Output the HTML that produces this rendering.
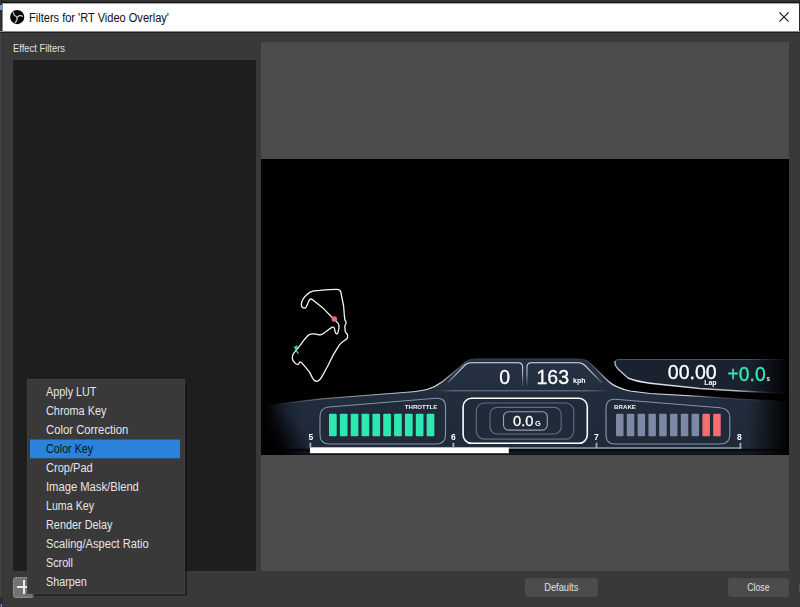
<!DOCTYPE html>
<html>
<head>
<meta charset="utf-8">
<title>Filters for 'RT Video Overlay'</title>
<style>
html,body{margin:0;padding:0;}
body{width:800px;height:607px;overflow:hidden;background:#393939;font-family:"Liberation Sans",sans-serif;position:relative;}
.abs{position:absolute;}
#frame{left:0;top:0;width:800px;height:607px;background:#393939;}
#topborder{left:0;top:0;width:800px;height:4px;background:linear-gradient(#333 0,#333 1px,#2f2f2f 1px,#2f2f2f 2px,#161616 2px,#161616 3px,#a8a8a8 3px,#a8a8a8 4px);}
#titlebar{left:3px;top:4px;width:796px;height:27px;background:#ffffff;}
#titleline{left:0;top:31px;width:800px;height:2px;background:linear-gradient(#8c8c8c 0,#8c8c8c 1px,#202020 1px,#202020 2px);}
#leftedge{left:0;top:0;width:3px;height:607px;background:linear-gradient(90deg,#414141 0,#414141 1.8px,#333 2.2px,#333 3px);}
#rightedge{left:799px;top:0;width:1px;height:33px;background:#2a2a2a;}
#title{left:29px;top:9.7px;font-size:12.5px;line-height:16px;color:#111;white-space:nowrap;transform-origin:0 50%;transform:scaleX(0.884);}
#efflabel{left:13px;top:41px;font-size:10.5px;line-height:14px;color:#e0e0e0;white-space:nowrap;transform-origin:0 50%;transform:scaleX(0.894);}
#list{left:13px;top:60px;width:243px;height:511px;background:#1f1e1f;}
#pane{left:261px;top:42px;width:528px;height:529px;background:#4c4c4c;}
#video{left:261px;top:159px;width:528px;height:296px;background:#000;overflow:hidden;}
.btn{background:#4c4c4c;border-radius:3px;color:#e0e0e0;font-size:10.5px;text-align:center;line-height:19.500px;height:19.500px;top:577.750px;}
#plus{left:13px;top:577px;width:20.500px;height:21px;background:#727272;border-radius:3px;}
#menu{left:27px;top:379.250px;width:158px;height:214.500px;background:#393939;box-shadow:0 0 0 1px #414141 inset;}
.mi{position:absolute;left:3px;width:150px;height:19px;line-height:19px;font-size:12.5px;color:#e6e6e6;white-space:nowrap;}
.mi span{position:absolute;left:16.3px;top:0;display:inline-block;transform-origin:0 50%;}
.mi.sel{background:none;color:#0b1622;}
#selbg{left:30px;top:439px;width:150px;height:20px;background:linear-gradient(to bottom,rgba(42,130,218,0.45) 0,rgba(42,130,218,0.45) 1px,#2a82da 1px,#2a82da 19px,rgba(42,130,218,0.35) 19px,rgba(42,130,218,0.35) 20px);}
</style>
</head>
<body>
<div id="frame" class="abs"></div>
<div id="topborder" class="abs"></div>
<div id="leftedge" class="abs"></div>
<div id="rightedge" class="abs"></div>
<div class="abs" style="left:0;top:0;width:3px;height:33px;background:linear-gradient(90deg,#343434 0,#343434 1px,#282828 1px,#282828 2px,#8a8a8a 2px,#8a8a8a 3px)"></div>
<div class="abs" style="left:2px;top:0;width:1px;height:3px;background:#1c1c1c"></div>
<div class="abs" style="left:2px;top:32px;width:1px;height:1px;background:#202020"></div>
<div class="abs" style="left:0;top:5px;width:2px;height:5px;background:linear-gradient(90deg,#4f93d6,#7aa9d8 60%,#c89a6a)"></div>
<div class="abs" style="left:0;top:596.500px;width:2.500px;height:7px;background:#2e2e2e"></div>
<div class="abs" style="left:0;top:603.500px;width:2px;height:3.500px;background:linear-gradient(90deg,#22226e,#9fb4cc)"></div>
<div class="abs" style="left:799px;top:584px;width:1px;height:8px;background:#57534b"></div>
<div id="titlebar" class="abs"></div>
<div id="titleline" class="abs"></div>

<!-- OBS icon -->
<svg class="abs" style="left:9px;top:9px" width="16" height="16" viewBox="0 0 16 16">
  <circle cx="8.200" cy="8.100" r="7.100" fill="#050505"/>
  <g fill="none" stroke="#c4c4c4" stroke-width="1.250" stroke-linecap="round">
    <path d="M4.300 3.700 C4.500 5.600 5.900 6.900 8.200 8.200"/>
    <path d="M13.400 7.300 C12 6.200 10 6.300 8.200 8.200"/>
    <path d="M6.200 13.400 C7.800 12.500 8.300 10.500 8.200 8.200"/>
  </g>
</svg>
<div id="title" class="abs">Filters for 'RT Video Overlay'</div>
<!-- close X -->
<svg class="abs" style="left:777px;top:10px" width="14" height="14" viewBox="0 0 14 14">
  <path d="M2.400 2.400 L11.600 11.600 M11.600 2.400 L2.400 11.600" stroke="#151515" stroke-width="1.150" fill="none"/>
</svg>

<div id="efflabel" class="abs">Effect Filters</div>
<div id="list" class="abs"></div>
<div id="pane" class="abs"></div>

<div id="video" class="abs">
<svg width="528" height="296" viewBox="261 159 528 296" style="position:absolute;left:0;top:0;will-change:transform;transform:translateZ(0)">
  <defs>
    <linearGradient id="fadeL" x1="0" y1="0" x2="1" y2="0" gradientUnits="objectBoundingBox">
      <stop offset="0" stop-color="#000" stop-opacity="1"/>
      <stop offset="0.250" stop-color="#000" stop-opacity="0.800"/>
      <stop offset="0.600" stop-color="#000" stop-opacity="0.250"/>
      <stop offset="1" stop-color="#000" stop-opacity="0"/>
    </linearGradient>
    <radialGradient id="fadeBL" cx="261" cy="458" r="52" gradientUnits="userSpaceOnUse">
      <stop offset="0" stop-color="#000" stop-opacity="1"/>
      <stop offset="0.450" stop-color="#000" stop-opacity="0.800"/>
      <stop offset="1" stop-color="#000" stop-opacity="0"/>
    </radialGradient>
    <linearGradient id="fadeR" x1="0" y1="0" x2="1" y2="0">
      <stop offset="0" stop-color="#000" stop-opacity="0"/>
      <stop offset="1" stop-color="#000" stop-opacity="1"/>
    </linearGradient>
    <linearGradient id="panelG" x1="0" y1="359" x2="0" y2="448" gradientUnits="userSpaceOnUse">
      <stop offset="0" stop-color="#263244"/>
      <stop offset="0.350" stop-color="#222d3d"/>
      <stop offset="1" stop-color="#1f2938"/>
    </linearGradient>
    <linearGradient id="edgeL" x1="265" y1="0" x2="474" y2="0" gradientUnits="userSpaceOnUse">
      <stop offset="0" stop-color="#c8ced6" stop-opacity="0"/>
      <stop offset="0.200" stop-color="#c8ced6" stop-opacity="0.350"/>
      <stop offset="0.600" stop-color="#d4d9e0" stop-opacity="0.800"/>
      <stop offset="0.830" stop-color="#e4e8ec" stop-opacity="1"/>
      <stop offset="0.900" stop-color="#aab2be" stop-opacity="0.600"/>
      <stop offset="1" stop-color="#56627a" stop-opacity="0.300"/>
    </linearGradient>
    <linearGradient id="edgeR" x1="580" y1="0" x2="789" y2="0" gradientUnits="userSpaceOnUse">
      <stop offset="0" stop-color="#56627a" stop-opacity="0.300"/>
      <stop offset="0.080" stop-color="#8c96a6" stop-opacity="0.600"/>
      <stop offset="0.150" stop-color="#e4e8ec" stop-opacity="1"/>
      <stop offset="0.500" stop-color="#d0d5dc" stop-opacity="0.950"/>
      <stop offset="0.670" stop-color="#8c96a6" stop-opacity="0.400"/>
      <stop offset="0.850" stop-color="#6c7686" stop-opacity="0.300"/>
      <stop offset="1" stop-color="#6c7686" stop-opacity="0"/>
    </linearGradient>
    <linearGradient id="lapS" x1="615" y1="0" x2="789" y2="0" gradientUnits="userSpaceOnUse">
      <stop offset="0" stop-color="#aab2be"/>
      <stop offset="0.150" stop-color="#e4e8ec"/>
      <stop offset="0.700" stop-color="#c8ced6" stop-opacity="0.900"/>
      <stop offset="0.850" stop-color="#9aa3b0" stop-opacity="0.350"/>
      <stop offset="1" stop-color="#9aa3b0" stop-opacity="0"/>
    </linearGradient>
    <linearGradient id="divG" x1="436" y1="0" x2="612" y2="0" gradientUnits="userSpaceOnUse">
      <stop offset="0" stop-color="#7d8796" stop-opacity="0"/>
      <stop offset="0.100" stop-color="#7d8796" stop-opacity="0.900"/>
      <stop offset="0.850" stop-color="#7d8796" stop-opacity="0.900"/>
      <stop offset="1" stop-color="#7d8796" stop-opacity="0"/>
    </linearGradient>
    <linearGradient id="boxS" x1="0" y1="362" x2="0" y2="387" gradientUnits="userSpaceOnUse">
      <stop offset="0" stop-color="#e2e6ea" stop-opacity="1"/>
      <stop offset="0.500" stop-color="#c0c6d0" stop-opacity="0.800"/>
      <stop offset="1" stop-color="#8c96a6" stop-opacity="0.150"/>
    </linearGradient>
    <linearGradient id="stripG" x1="0" y1="448.800" x2="0" y2="455" gradientUnits="userSpaceOnUse">
      <stop offset="0" stop-color="#06080c"/>
      <stop offset="0.300" stop-color="#090c12"/>
      <stop offset="0.600" stop-color="#141b27"/>
      <stop offset="1" stop-color="#0d1219"/>
    </linearGradient>
  </defs>

  <!-- lower main panel -->
  <path d="M261 406 L321 398.800 L410 392 C425 390.800 433 388.500 442 382 L460 367 C465 362.500 467 359.200 474 359 L580 359 C586 359.200 588 361 592 365 L608 381 C614 386.500 620 388.800 630 391 L650 393.500 L700 396.400 L740 399 L789 401.500 L789 455 L261 455 Z" fill="url(#panelG)"/>
  <!-- lap panel -->
  <path d="M619 359.500 L789 359.500 L789 394.800 L740 390.600 L700 387.800 L650 383.200 C640 382 633 380 628 378 L618 369 C615.500 366 614.500 362.500 615.500 361 C616 360 617 359.500 619 359.500 Z" fill="#1a2230"/>
  <path d="M789 359.500 L619 359.500 C617 359.500 616 360 615.500 361" fill="none" stroke="#5d6776" stroke-width="0.800"/>
  <path d="M615.500 361 C614.500 362.500 615.500 366 618 369 L628 378 C633 380 640 382 650 383.200 L700 388.500 L740 391 L789 393.500" fill="none" stroke="url(#lapS)" stroke-width="1.400"/>
  <!-- main panel highlight edges -->
  <path d="M261 406 L321 398.800 L410 392 C425 390.800 433 388.500 442 382 L460 367 C465 362.500 467 359.200 474 359" fill="none" stroke="url(#edgeL)" stroke-width="1.200"/>
  <path d="M474 359 L580 359" fill="none" stroke="#3a4556" stroke-width="1"/>
  <path d="M580 359 C586 359.200 588 361 592 365 L608 381 C614 386.500 620 388.800 630 391 L650 393.500 L700 396.400 L740 399 L789 401.500" fill="none" stroke="url(#edgeR)" stroke-width="1.200"/>
  <!-- divider -->
  <line x1="436" y1="390.800" x2="612" y2="390.800" stroke="url(#divG)" stroke-width="1"/>
  <!-- inner boxes for 0 / 163 -->
  <path d="M448 382.500 L465 365 C467 363.200 468.500 362.800 471 362.800 L518 362.800 C521 362.800 522.600 364.200 522.600 367 L522.600 386" fill="none" stroke="url(#boxS)" stroke-width="1.100"/>
  <path d="M527 386 L527 367 C527 364.200 528.600 362.800 531.500 362.800 L579 362.800 C581.500 362.800 583 363.400 585 365.500 L602 382.800" fill="none" stroke="url(#boxS)" stroke-width="1.100"/>

  <!-- bottom dark strip -->
  <rect x="261" y="448.800" width="528" height="7" fill="url(#stripG)"/>
  <!-- fades at left/right ends -->
  <rect x="261" y="385" width="40" height="71" fill="url(#fadeL)"/>
  <rect x="261" y="385" width="60" height="71" fill="url(#fadeBL)"/>
  <rect x="748" y="355" width="41" height="101" fill="url(#fadeR)"/>
  <line x1="310" y1="448" x2="741.300" y2="448" stroke="#8e9cb5" stroke-width="1.700"/>
  <rect x="310" y="447.500" width="198.800" height="5.700" fill="#ffffff"/>
  <g stroke="#9aaac4" stroke-width="1.800">
    <line x1="310.400" y1="442.800" x2="310.400" y2="448"/>
    <line x1="453.400" y1="442.800" x2="453.400" y2="448"/>
    <line x1="596.500" y1="442.800" x2="596.500" y2="448"/>
    <line x1="740.400" y1="442.800" x2="740.400" y2="448.800"/>
  </g>

  <!-- throttle panel -->
  <path d="M320 416.500 C320 410.500 323 407.500 329 407 L436 398.300 C442 397.800 445.500 400.500 445.500 406.500 L445.500 435 C445.500 441 442 444 436 444 L329.500 444 C323.500 444 320 441 320 435 Z" fill="#202a39" stroke="#8592aa" stroke-width="1.150"/>
  <g fill="#2ee8b2">
    <rect x="329" y="413.800" width="7.700" height="22.500" rx="0.800"/>
    <rect x="339.850" y="413.800" width="7.700" height="22.500" rx="0.800"/>
    <rect x="350.700" y="413.800" width="7.700" height="22.500" rx="0.800"/>
    <rect x="361.550" y="413.800" width="7.700" height="22.500" rx="0.800"/>
    <rect x="372.400" y="413.800" width="7.700" height="22.500" rx="0.800"/>
    <rect x="383.250" y="413.800" width="7.700" height="22.500" rx="0.800"/>
    <rect x="394.100" y="413.800" width="7.700" height="22.500" rx="0.800"/>
    <rect x="404.950" y="413.800" width="7.700" height="22.500" rx="0.800"/>
    <rect x="415.800" y="413.800" width="7.700" height="22.500" rx="0.800"/>
    <rect x="426.650" y="413.800" width="7.700" height="22.500" rx="0.800"/>
  </g>
  <text x="437.300" y="408.800" text-anchor="end" font-family="Liberation Sans, sans-serif" font-weight="bold" font-size="5.800" fill="#f2f2f2" textLength="32.500" lengthAdjust="spacingAndGlyphs">THROTTLE</text>

  <!-- center G panel -->
  <rect x="463.100" y="398.300" width="124.200" height="45" rx="8.500" fill="#202a39" stroke="#ffffff" stroke-width="1.600"/>
  <rect x="476.300" y="403" width="97.500" height="36.100" rx="8" fill="none" stroke="#5f6c86" stroke-width="1.150"/>
  <rect x="490" y="407.400" width="71.200" height="26.600" rx="7" fill="none" stroke="#5f6c86" stroke-width="1.150"/>
  <rect x="503.500" y="411.700" width="43.800" height="18.400" rx="5" fill="none" stroke="#93a0b8" stroke-width="1.150"/>
  <text x="513" y="425.500" font-family="Liberation Sans, sans-serif" font-size="14.700" fill="#ffffff" stroke="#ffffff" stroke-width="0.300">0.0</text>
  <text x="535.100" y="426" font-family="Liberation Sans, sans-serif" font-weight="bold" font-size="7.600" fill="#ffffff">G</text>

  <!-- brake panel -->
  <path d="M606 408 C606 402 609 399 615 399.300 L720 407.800 C726 408.300 729.800 411.500 729.800 417.500 L729.800 435 C729.800 441 726 444 720 444 L615 444 C609 444 606 441 606 435 Z" fill="#202a39" stroke="#8592aa" stroke-width="1.150"/>
  <g fill="#7c88a4">
    <rect x="616" y="413.800" width="7.500" height="22.500" rx="0.800"/>
    <rect x="626.800" y="413.800" width="7.500" height="22.500" rx="0.800"/>
    <rect x="637.600" y="413.800" width="7.500" height="22.500" rx="0.800"/>
    <rect x="648.400" y="413.800" width="7.500" height="22.500" rx="0.800"/>
    <rect x="659.200" y="413.800" width="7.500" height="22.500" rx="0.800"/>
    <rect x="670" y="413.800" width="7.500" height="22.500" rx="0.800"/>
    <rect x="680.800" y="413.800" width="7.500" height="22.500" rx="0.800"/>
    <rect x="691.600" y="413.800" width="7.500" height="22.500" rx="0.800"/>
  </g>
  <g fill="#f56c72">
    <rect x="702.400" y="413.800" width="7.500" height="22.500" rx="0.800"/>
    <rect x="713.200" y="413.800" width="7.500" height="22.500" rx="0.800"/>
  </g>
  <text x="614" y="408.800" font-family="Liberation Sans, sans-serif" font-weight="bold" font-size="5.800" fill="#f2f2f2" textLength="22" lengthAdjust="spacingAndGlyphs">BRAKE</text>

  <!-- numbers 5 6 7 8 -->
  <g font-family="Liberation Sans, sans-serif" font-weight="bold" font-size="8.500" fill="#ffffff" text-anchor="middle">
    <text x="310.800" y="440">5</text>
    <text x="453.300" y="440">6</text>
    <text x="596.300" y="440">7</text>
    <text x="739.300" y="440">8</text>
  </g>

  <!-- speed / gear -->
  <g font-family="Liberation Sans, sans-serif" fill="#ffffff" stroke="#ffffff" stroke-width="0.300">
    <text x="499.300" y="383.800" font-size="19.500">0</text>
    <text x="536.500" y="383.800" font-size="19.500">163</text>
    <text x="573" y="383.100" font-size="7" font-weight="bold" stroke="none">kph</text>
    <text x="667.800" y="379" font-size="19.500">00.00</text>
    <text x="704.200" y="384.600" font-size="7" font-weight="bold" stroke="none">Lap</text>
  </g>
  <g font-family="Liberation Sans, sans-serif" fill="#38e6b0" stroke="#38e6b0" stroke-width="0.350">
    <text x="727.600" y="381" font-size="19.300">+0.0</text>
    <text x="766.600" y="381.400" font-size="6.300" font-weight="bold" fill="#e8ecef" stroke="none">s</text>
  </g>

  <!-- track map -->
  <path d="M310.600 291.800 C313 290.800 316 290.600 319.500 290.400 L328.800 289.600 L336.500 289.300 C339 289.200 340.300 290 340.800 292 L343.600 306 L344.500 317.200 L344.800 319.500 C345.200 321 346.200 321.400 346.200 322.400 C346.200 324 344.800 325 344.800 326.400 L345.200 331.300 C345.600 333 347.600 333.800 347.600 335.300 C347.800 337 347.400 338.200 346.800 338.800 C345.600 340 344.400 340.500 343.300 341.300 C341.800 342.400 340.400 343.400 339.400 344.800 L333.400 354.600 L327.500 366.500 L322.600 375.400 C321.500 377.500 320.500 379 319.600 379.800 C318.600 380.800 317.600 381.300 316.600 381.300 C315.600 381.300 314.800 380.900 314.200 380.300 C313.400 379.500 312.800 378.500 312.200 377.400 L309.700 372.400 L307.700 369.900 L302.700 363.900 C301.700 362.700 300.700 361.800 299.800 362 C299 362.300 299.300 364 298.500 364.300 C297.300 364.700 295.800 364 294.800 362.900 C293.400 361.500 292.300 359.700 292.300 358 C292.300 356 293 354.200 293.800 353.100 L298.800 347.100 L304.700 339.200 C306.500 337 307.800 335 309.600 334.300 C311.200 333.700 313 333.800 314.600 333.900 C316.600 334.100 318.800 335.200 320.500 334.900 C322.600 334.500 324.600 332.600 326.400 331.300 L331.800 327.400 C332.800 326.800 333.800 326.900 334.300 328 C334.900 329.200 334.800 331 335.300 332.300 C335.600 333.200 336.200 334.100 336.900 333.900 C337.800 333.600 338.100 332.400 338.300 331.300 C338.700 329.400 339.200 327.300 338.900 325.400 C338.700 324.200 338.100 323.200 337.300 322.400 L334.300 319.500 L323.500 308.600 L312.600 299.700 C311.600 298.900 310.400 298.900 309.600 299.700 C308.600 300.800 308.300 302.400 307.700 303.700 C307.100 305.100 306.700 306.900 305.700 307.600 C304.800 308.200 303.500 308.200 302.700 307.600 C301.700 306.900 301.300 305.800 301.300 304.600 C301.300 302.800 301.900 301.200 302.700 299.700 C303.700 297.800 305.200 296.200 306.700 294.800 C307.900 293.600 309.200 292.500 310.600 291.800 Z" fill="none" stroke="#f4f4f4" stroke-width="1.300" stroke-linejoin="round"/>
  <circle cx="334.300" cy="319" r="2.800" fill="#f2686e"/>
  <path d="M293.900 347.300 L297.400 345.700 L296.900 348.800 Z" fill="#2ee8b2" stroke="#2ee8b2" stroke-width="0.600" stroke-linejoin="round"/>
  <path d="M295.400 347.800 C295.400 350 296.500 351.800 298.400 353.600" fill="none" stroke="#2ee8b2" stroke-width="1.300"/>

</svg>
</div>

<!-- bottom buttons -->
<div class="abs btn" style="left:525px;width:73px;"><span style="display:inline-block;transform:scaleX(0.886)">Defaults</span></div>
<div class="abs btn" style="left:728px;width:61px;"><span style="display:inline-block;transform:scaleX(0.827)">Close</span></div>

<!-- plus button -->
<div id="plus" class="abs"></div>
<svg class="abs" style="left:13px;top:577px" width="22" height="21" viewBox="0 0 22 21">
  <rect x="0.700" y="0.700" width="19.100" height="19.600" rx="2.500" fill="none" stroke="#a4acba" stroke-width="1" stroke-dasharray="1 1"/>
  <rect x="4" y="9" width="14" height="2" fill="#ececec"/>
  <rect x="10" y="3" width="2" height="14" fill="#ececec"/>
</svg>

<!-- menu -->
<div class="abs" style="left:185px;top:384px;width:2px;height:211.750px;background:rgba(0,0,0,0.36);border-radius:0 1px 2px 0"></div>
<div class="abs" style="left:32px;top:593.750px;width:153px;height:2px;background:rgba(0,0,0,0.36);border-radius:0 0 0 1px"></div>
<div id="menu" class="abs"></div>
<div id="selbg" class="abs"></div>
<div class="abs" style="left:27px;top:379.250px;width:158px;height:214.500px;">
  <div class="mi" style="top:3.25px"><span style="transform:scaleX(0.865)">Apply LUT</span></div>
  <div class="mi" style="top:22.25px"><span style="transform:scaleX(0.869)">Chroma Key</span></div>
  <div class="mi" style="top:41.25px"><span style="transform:scaleX(0.904)">Color Correction</span></div>
  <div class="mi sel" style="top:60.25px"><span style="transform:scaleX(0.860)">Color Key</span></div>
  <div class="mi" style="top:79.25px"><span style="transform:scaleX(0.884)">Crop/Pad</span></div>
  <div class="mi" style="top:98.25px"><span style="transform:scaleX(0.897)">Image Mask/Blend</span></div>
  <div class="mi" style="top:117.25px"><span style="transform:scaleX(0.853)">Luma Key</span></div>
  <div class="mi" style="top:136.25px"><span style="transform:scaleX(0.869)">Render Delay</span></div>
  <div class="mi" style="top:155.25px"><span style="transform:scaleX(0.891)">Scaling/Aspect Ratio</span></div>
  <div class="mi" style="top:174.25px"><span style="transform:scaleX(0.860)">Scroll</span></div>
  <div class="mi" style="top:193.25px"><span style="transform:scaleX(0.861)">Sharpen</span></div>
</div>
</body>
</html>
